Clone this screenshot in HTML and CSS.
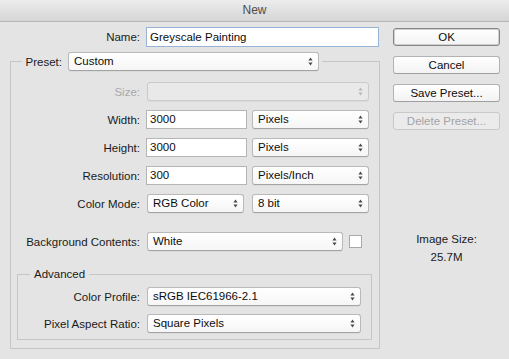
FILE: index.html
```html
<!DOCTYPE html>
<html>
<head>
<meta charset="utf-8">
<title>New</title>
<link rel="stylesheet" href="styles.css">
</head>
<body>
<div class="window">
  <div class="titlebar">New</div>
  <div class="content">
    <div class="form">
      <div class="row name-row">
        <span class="label name-label">Name:</span>
        <div class="field input name-input">Greyscale Painting</div>
      </div>

      <fieldset class="group main-group">
        <legend class="preset-legend">
          <span class="legend-label">Preset:</span>
          <div class="field select preset-select">Custom<svg class="arrows" viewBox="0 0 5 9" width="5" height="9"><path d="M2.5 0.5 L4.6 3.4 L0.4 3.4 Z M2.5 8.5 L4.6 5.6 L0.4 5.6 Z"/></svg></div>
        </legend>

        <div class="rows">
          <div class="row">
            <span class="label disabled-text">Size:</span>
            <div class="field select disabled size-select"><svg class="arrows" viewBox="0 0 5 9" width="5" height="9"><path d="M2.5 0.5 L4.6 3.4 L0.4 3.4 Z M2.5 8.5 L4.6 5.6 L0.4 5.6 Z"/></svg></div>
          </div>
          <div class="row">
            <span class="label">Width:</span>
            <div class="field input num-input">3000</div>
            <div class="field select unit-select">Pixels<svg class="arrows" viewBox="0 0 5 9" width="5" height="9"><path d="M2.5 0.5 L4.6 3.4 L0.4 3.4 Z M2.5 8.5 L4.6 5.6 L0.4 5.6 Z"/></svg></div>
          </div>
          <div class="row">
            <span class="label">Height:</span>
            <div class="field input num-input">3000</div>
            <div class="field select unit-select">Pixels<svg class="arrows" viewBox="0 0 5 9" width="5" height="9"><path d="M2.5 0.5 L4.6 3.4 L0.4 3.4 Z M2.5 8.5 L4.6 5.6 L0.4 5.6 Z"/></svg></div>
          </div>
          <div class="row">
            <span class="label">Resolution:</span>
            <div class="field input num-input">300</div>
            <div class="field select unit-select">Pixels/Inch<svg class="arrows" viewBox="0 0 5 9" width="5" height="9"><path d="M2.5 0.5 L4.6 3.4 L0.4 3.4 Z M2.5 8.5 L4.6 5.6 L0.4 5.6 Z"/></svg></div>
          </div>
          <div class="row">
            <span class="label">Color Mode:</span>
            <div class="field select mode-select">RGB Color<svg class="arrows" viewBox="0 0 5 9" width="5" height="9"><path d="M2.5 0.5 L4.6 3.4 L0.4 3.4 Z M2.5 8.5 L4.6 5.6 L0.4 5.6 Z"/></svg></div>
            <div class="field select bit-select">8 bit<svg class="arrows" viewBox="0 0 5 9" width="5" height="9"><path d="M2.5 0.5 L4.6 3.4 L0.4 3.4 Z M2.5 8.5 L4.6 5.6 L0.4 5.6 Z"/></svg></div>
          </div>
          <div class="row bg-row">
            <span class="label">Background Contents:</span>
            <div class="field select bg-select">White<svg class="arrows" viewBox="0 0 5 9" width="5" height="9"><path d="M2.5 0.5 L4.6 3.4 L0.4 3.4 Z M2.5 8.5 L4.6 5.6 L0.4 5.6 Z"/></svg></div>
            <div class="swatch"></div>
          </div>
        </div>

        <fieldset class="group advanced">
          <legend class="adv-legend">Advanced</legend>
          <div class="rows adv-rows">
            <div class="row">
              <span class="label adv-label">Color Profile:</span>
              <div class="field select adv-select">sRGB IEC61966-2.1<svg class="arrows" viewBox="0 0 5 9" width="5" height="9"><path d="M2.5 0.5 L4.6 3.4 L0.4 3.4 Z M2.5 8.5 L4.6 5.6 L0.4 5.6 Z"/></svg></div>
            </div>
            <div class="row">
              <span class="label adv-label">Pixel Aspect Ratio:</span>
              <div class="field select adv-select">Square Pixels<svg class="arrows" viewBox="0 0 5 9" width="5" height="9"><path d="M2.5 0.5 L4.6 3.4 L0.4 3.4 Z M2.5 8.5 L4.6 5.6 L0.4 5.6 Z"/></svg></div>
            </div>
          </div>
        </fieldset>
      </fieldset>
    </div>

    <div class="side">
      <div class="buttons">
        <div class="button default">OK</div>
        <div class="button">Cancel</div>
        <div class="button">Save Preset...</div>
        <div class="button disabled-button">Delete Preset...</div>
      </div>
      <div class="image-size">
        <div>Image Size:</div>
        <div>25.7M</div>
      </div>
    </div>
  </div>
</div>
</body>
</html>
```

FILE: styles.css
```css
html, body {
  margin: 0;
  padding: 0;
  background: #e4e4e4;
}

.window {
  width: 509px;
  height: 359px;
  overflow: hidden;
  background: #e4e4e4;
  font-family: "Liberation Sans", Arial, sans-serif;
  font-size: 11.5px;
  color: #1a1a1a;
}

.titlebar {
  height: 21px;
  line-height: 21px;
  text-align: center;
  color: #4d4d4d;
  font-size: 12px;
  background: linear-gradient(#ececec, #d6d6d6);
  border-bottom: 1px solid #b6b6b6;
}

.content {
  display: flex;
}

.form {
  width: 380px;
}

.row {
  display: flex;
  align-items: center;
  height: 19px;
}

.label {
  box-sizing: border-box;
  width: 130px;
  flex: none;
  text-align: right;
  padding-right: 1px;
  margin-right: 5px;
  color: #1a1a1a;
  white-space: nowrap;
}

.disabled-text {
  color: #a9a9a9;
}

.field {
  box-sizing: border-box;
  height: 19px;
  line-height: 17px;
  flex: none;
  white-space: nowrap;
  color: #0d0d0d;
}

.input {
  background: #fff;
  border: 1px solid #b5b5b5;
  padding-left: 3px;
}

.name-row {
  margin-top: 5px;
  height: 20px;
}

.name-label {
  width: 141px;
}

.name-input {
  width: 233px;
  height: 20px;
  line-height: 18px;
  border-color: #97b3d5;
}

.select {
  position: relative;
  margin-left: 1px;
  background: linear-gradient(#ffffff, #f6f6f6);
  border: 1px solid #b9b9b9;
  border-bottom-color: #a3a3a3;
  border-radius: 3px;
  padding-left: 5px;
  box-shadow: 0 1px 0 rgba(0, 0, 0, 0.04);
}

.arrows {
  position: absolute;
  right: 5px;
  top: 4px;
  fill: #4a4a4a;
}

.select.disabled {
  background: #e9e9e9;
  border-color: #cacaca;
}

.select.disabled .arrows {
  fill: #b8b8b8;
}

.group {
  margin: 0;
  padding: 0;
  border: 1px solid #c6c6c6;
  min-width: 0;
}

.main-group {
  box-sizing: border-box;
  margin: 5px 0 0 10px;
  width: 370px;
  height: 297px;
}

.preset-legend {
  display: flex;
  align-items: center;
  padding: 0 3px;
  margin-left: 11px;
  height: 19px;
}

.legend-label {
  box-sizing: border-box;
  width: 42px;
  padding-right: 5px;
  text-align: right;
  color: #1a1a1a;
}

.preset-select {
  width: 251px;
}

.rows {
  display: flex;
  flex-direction: column;
  gap: 9px;
  margin-top: 11px;
}

.size-select {
  width: 222px;
}

.num-input {
  width: 101px;
}

.unit-select {
  width: 117px;
  margin-left: 5px;
}

.mode-select {
  width: 97px;
}

.bit-select {
  width: 117px;
  margin-left: 8px;
}

.bg-row {
  margin-top: 10px;
}

.bg-select {
  width: 196px;
}

.swatch {
  box-sizing: border-box;
  width: 13px;
  height: 13px;
  margin-left: 6px;
  background: #fff;
  border: 1px solid #a9a9a9;
}

.advanced {
  box-sizing: border-box;
  margin: 16px 0 0 6px;
  width: 355px;
  padding-bottom: 6px;
}

.adv-legend {
  padding: 0 4px;
  margin-left: 12px;
  line-height: 14px;
  color: #1a1a1a;
}

.adv-rows {
  margin-top: 6px;
  gap: 8px;
}

.adv-label {
  width: 123px;
}

.adv-select {
  width: 214px;
}

.side {
  margin-left: 13px;
  width: 107px;
}

.buttons {
  display: flex;
  flex-direction: column;
  gap: 10px;
  margin-top: 6px;
}

.button {
  box-sizing: border-box;
  height: 18px;
  line-height: 16px;
  text-align: center;
  color: #0d0d0d;
  background: linear-gradient(#ffffff, #f3f3f3);
  border: 1px solid #b3b3b3;
  border-bottom-color: #9f9f9f;
  border-radius: 3px;
}

.button.default {
  border-color: #858585;
  box-shadow: inset 0 0 0 1px #d0d0d0;
}

.disabled-button {
  color: #a3a3a3;
  background: #ebebeb;
  border-color: #c9c9c9;
}

.image-size {
  margin-top: 100px;
  text-align: center;
  line-height: 18px;
  color: #1a1a1a;
}
```
